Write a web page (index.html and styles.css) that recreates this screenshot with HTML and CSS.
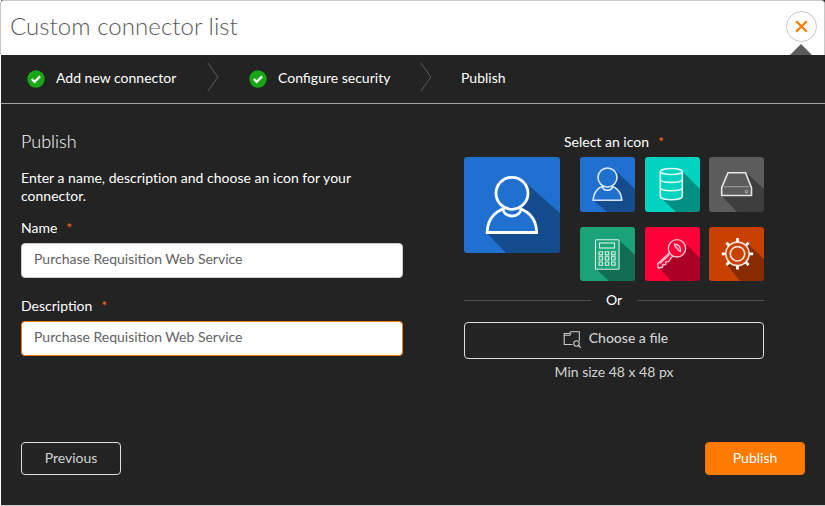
FILE: index.html
```html
<!DOCTYPE html>
<html lang="en">
<head>
<meta charset="utf-8">
<title>Custom connector list</title>
<link rel="stylesheet" href="styles.css">
</head>
<body>
<div class="panel">
  <header class="header">
    <h1 class="title">Custom connector list</h1>
    <button class="close" aria-label="Close"><svg width="13" height="13" viewBox="0 0 13 13"><path d="M1.2 1.200l10.600 10.600M11.800 1.200l-10.600 10.600"/></svg></button>
  </header>
  <nav class="steps">
    <div class="step step-first"><svg class="check" viewBox="0 0 18 18"><circle cx="9" cy="9" r="8.7"/><path d="M4.8 9l2.8 2.8 5.5-5.4"/></svg><span class="step-label">Add new connector</span></div>
    <svg class="chevron" viewBox="0 0 12 30"><path d="M.8.8l10 14.2-10 14.2"/></svg>
    <div class="step step-second"><svg class="check" viewBox="0 0 18 18"><circle cx="9" cy="9" r="8.7"/><path d="M4.8 9l2.8 2.8 5.5-5.4"/></svg><span class="step-label">Configure security</span></div>
    <svg class="chevron" viewBox="0 0 12 30"><path d="M.8.8l10 14.2-10 14.2"/></svg>
    <div class="step step-last">Publish</div>
  </nav>
  <main class="content">
    <section class="form">
      <h2 class="subtitle">Publish</h2>
      <p class="intro">Enter a name, description and choose an icon for your connector.</p>
      <label class="label" for="name">Name<span class="star">*</span></label>
      <input class="input" id="name" value="Purchase Requisition Web Service">
      <label class="label" for="desc">Description<span class="star">*</span></label>
      <input class="input active" id="desc" value="Purchase Requisition Web Service">
    </section>
    <section class="icons">
      <div class="icons-label">Select an icon<span class="star">*</span></div>
      <div class="picker">
        <svg class="preview blue" viewBox="0 0 96 96">
          <path class="shade" d="M62 26L96 56V96H42L23 76z"/>
          <g class="line heavy blue-fill"><path d="M23.2 75.5C23.2 61 33 50.8 48 50.8s24.600 10.200 24.600 24.700z"/><path d="M39 51.500c0 4 3.500 7.500 9 7.500s9-3.500 9-7.500"/><circle cx="48" cy="36.300" r="16"/></g>
        </svg>
        <div class="grid">
          <svg class="tile blue" viewBox="0 0 55 55">
            <path class="shade" d="M36 14L55 32V55H27L13 43z"/>
            <g class="line blue-fill"><path d="M13.200 43.300c.3-8.300 6-14.800 14.200-14.800s14.100 6.500 14.400 14.800z"/><path d="M22.500 29c0 2.400 2 4.200 5 4.200s5-1.800 5-4.200"/><circle cx="27.500" cy="20.500" r="9.500"/></g>
          </svg>
          <svg class="tile teal" viewBox="0 0 55 55">
            <path class="shade" d="M37 14L55 32V55H31L16 41z"/>
            <g class="line teal-fill"><path d="M15.300 14v25.300c0 2 4.900 3.500 11 3.500s11-1.500 11-3.500V14"/><ellipse cx="26.300" cy="14.500" rx="11" ry="3"/><path d="M15.300 22.200c0 2 4.900 3.200 11 3.200s11-1.200 11-3.200M15.300 30.600c0 2 4.900 3.200 11 3.200s11-1.200 11-3.200"/></g>
          </svg>
          <svg class="tile gray" viewBox="0 0 55 55">
            <path class="shade" d="M37 15.500L55 32V55H28L12 38z"/>
            <g class="line gray-fill"><path d="M19 15.700h17.500l6 15V38.500H12.700v-7.800z"/><path class="faint" d="M15 29.700h25"/><circle class="faint" cx="37.500" cy="34.500" r="1.300"/></g>
          </svg>
          <svg class="tile green" viewBox="0 0 55 54">
            <path class="shade" d="M39 13L55 28V55H30L16 42z"/>
            <g class="line thin green-fill"><rect x="15.500" y="12.700" width="23.600" height="29.600" rx="1"/><rect x="19.500" y="16" width="15" height="5"/><path d="M19 24.700h3.500v3.200H19zM25.300 24.700h3.500v3.200h-3.500zM31.600 24.700h3.500v3.200h-3.500zM19 29.800h3.500V33H19zM25.300 29.800h3.500V33h-3.500zM31.600 29.800h3.500V33h-3.500zM19 35h3.500v3.200H19zM25.300 35h3.500v3.200h-3.500zM31.600 35h3.500v3.200h-3.500z"/></g>
          </svg>
          <svg class="tile red" viewBox="0 0 55 54">
            <path class="shade" d="M39 15L55 31V55H27L14 41z"/>
            <g class="line key red-fill"><path d="M25.300 25L12.700 36.800l.6 4.200 4.200-.7.300-2.500 2.800-.3.300-2.600 2.700-.3 2.300-3.500 3.500-3.500"/><path d="M24.500 27.500l-9.500 9"/><circle cx="32" cy="21.300" r="8.700"/><path d="M29.600 17.200q5.900 0 6 7-2.500 0-3-2.800-3-1-3-4.200z"/></g>
          </svg>
          <svg class="tile orange" viewBox="0 0 55 54">
            <path class="shade" d="M38 16L55 32V55H32L18 38z"/>
            <g class="gear"><path d="M28.500 11v5M28.500 37.500v5M12.800 26.800h5M39.200 26.800h5M17.400 15.700l3.300 3.300M36.300 34.600l3.300 3.300M17.400 37.900l3.300-3.300M36.300 19l3.300-3.300"/></g>
            <g class="line orange-fill"><circle cx="28.500" cy="26.800" r="11.700"/><circle cx="28.500" cy="26.800" r="7.200"/></g>
          </svg>
        </div>
      </div>
      <div class="divider"><span>Or</span></div>
      <button class="file"><svg class="file-icon" viewBox="0 0 19 18"><path d="M9.500 13.500H1.200V2.500h5l1.500-1.700h8.600v9M1.200 4.200h5.600l1.400-1.700"/><circle cx="13.500" cy="12.500" r="2.700"/><path d="M15.500 14.500l2.500 2.300"/></svg><span>Choose a file</span></button>
      <div class="hint">Min size 48 x 48 px</div>
    </section>
  </main>
  <footer class="footer"><button class="button previous">Previous</button><button class="button publish">Publish</button></footer>
</div>
</body>
</html>
```
FILE: styles.css
```css
* { box-sizing: border-box; }
body { margin: 0; background: #fff; font: 14px/18px Lato, "Liberation Sans", sans-serif; color: #fff; }
button, input { font: inherit; }
.panel { height: 506px; margin-left: 1px; display: flex; flex-direction: column; background: #232323; border-bottom: 1px solid #ccc; }
.header { height: 55px; display: flex; justify-content: space-between; align-items: flex-start; margin-left: -1px; background: #fff; border: 1px solid #c8c8c8; border-bottom: 0; border-radius: 4px 4px 0 0; padding: 10px 7px 0 9px; position: relative; }
.header::after { content: ""; position: absolute; right: 12px; bottom: 0; border: 11px solid transparent; border-top: 0; border-bottom-color: #5b5b5b; }
.title { margin: -1px 0 0; color: #58585b; font-size: 24px; line-height: 32px; font-weight: 300; letter-spacing: .06px; }
.close { width: 31px; height: 31px; padding: 0; display: grid; place-items: center; border: 1px solid #c8c8c8; border-radius: 50%; background: #fff; }
.close path { stroke: #ff7b00; stroke-width: 2.2; }
.steps { height: 49px; display: flex; align-items: flex-start; border-bottom: 1px solid #a6a6a6; }
.step { display: flex; align-items: flex-start; padding-top: 14px; }
.step-first { width: 206px; padding-left: 26px; }
.step-second { width: 201px; padding-left: 30px; }
.step-last { padding-left: 29px; }
.check { width: 18px; height: 18px; margin: 1px 11px 0 0; }
.check circle { fill: #16a616; }
.check path { fill: none; stroke: #fff; stroke-width: 2.3; }
.chevron { width: 12px; height: 30px; margin-top: 7px; }
.chevron path { fill: none; stroke: #5c5c5c; stroke-width: 1; }
.content { display: flex; justify-content: space-between; height: 338px; padding: 28px 61px 0 20px; }
.form { width: 382px; }
.subtitle { margin: -1px 0 0; font-size: 18px; line-height: 20px; font-weight: 300; }
.intro { width: 350px; margin: 18px 0 14px; letter-spacing: .02px; font-variant-ligatures: common-ligatures; }
.label { display: block; height: 24px; }
.star { color: #ff671b; margin-left: 9px; }
.input { display: block; width: 100%; height: 35px; margin-bottom: 19px; padding: 0 12px 4px; border: 1px solid #ccc; border-radius: 4px; background: #fff; color: #626265; outline: 0; }
.active { border-color: #ff7b00; }
.icons { width: 300px; }
.icons-label { text-align: center; height: 25px; padding-top: 1px; }
.picker { display: flex; justify-content: space-between; }
.preview, .tile { border-radius: 3px; display: block; }
.preview { width: 96px; height: 96px; }
.grid { width: 184px; display: grid; grid-template-columns: repeat(3, 55px); grid-template-rows: 55px 54px; justify-content: space-between; row-gap: 15px; }
.tile { width: 55px; height: 100%; }
.line { stroke: #fff; stroke-width: 1.6; stroke-opacity: .85; }
.heavy { stroke-width: 2.8; stroke-opacity: 1; }
.thin { stroke-width: 1.1; }
.key { stroke-width: 1.4; stroke-opacity: .75; }
.faint { stroke-opacity: .45; stroke-width: 1.1; }
.gear { stroke: #fff; stroke-width: 2.8; }
.shade { fill: #000; fill-opacity: .32; }
.blue { background: #2070d0; }
.blue-fill { fill: #2070d0; }
.teal { background: #00d4c0; }
.teal-fill { fill: #00d4c0; }
.gray { background: #5c5c5c; }
.gray-fill { fill: #5c5c5c; }
.green { background: #1aa376; }
.green-fill { fill: #1aa376; }
.red { background: #ff0038; }
.red-fill { fill: #ff0038; }
.orange { background: #c94100; }
.orange-fill { fill: #c94100; }
.divider { display: flex; align-items: center; gap: 15px; height: 18px; margin-top: 10px; }
.divider::before, .divider::after { content: ""; flex: 1; height: 1px; background: #505050; margin-top: 1px; }
.file { width: 300px; height: 37px; margin-top: 13px; padding: 0 0 5px 3px; display: flex; align-items: center; justify-content: center; gap: 7px; border: 1px solid #ddd; border-radius: 4px; background: transparent; color: #d2d2d2; font-weight: 500; }
.file-icon { width: 19px; height: 18px; margin-top: 3px; fill: none; stroke: #ccc; stroke-width: 1.1; }
.hint { margin-top: 4px; text-align: center; color: #d2d2d2; }
.footer { display: flex; justify-content: space-between; padding: 0 20px; }
.button { width: 100px; height: 33px; padding: 0 0 1px; border: 1px solid #ddd; border-radius: 4px; background: transparent; color: #d2d2d2; }
.publish { background: #ff7b00; border-color: #f47500; color: #fff; }
```
